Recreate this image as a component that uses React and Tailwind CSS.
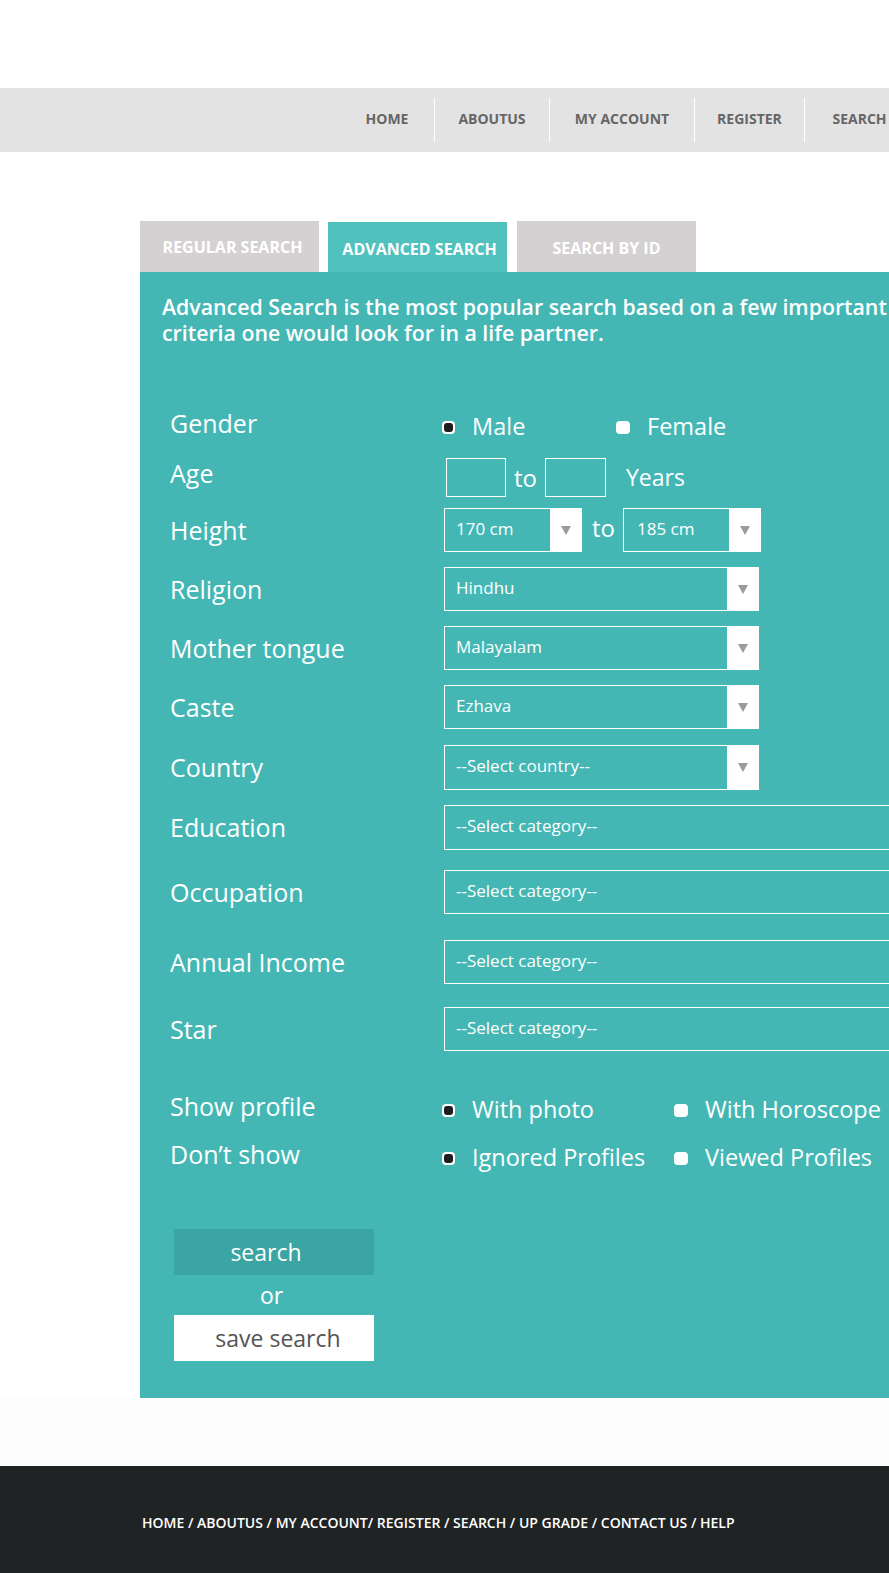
import React from "react";

const font = { fontFamily: '"Open Sans", "Noto Sans", Arial, sans-serif' };

function Radio({ checked }) {
  if (checked) {
    return (
      <span className="w-[13px] h-[13px] rounded-[4px] bg-white p-[2px] flex shrink-0">
        <span className="flex-1 rounded-[3px] bg-[#1d1d1d]" />
      </span>
    );
  }
  return <span className="w-[14px] h-[13px] rounded-[4px] bg-white shrink-0" />;
}

function Option({ checked, label, width }) {
  return (
    <div className="flex items-center" style={{ width }}>
      <Radio checked={checked} />
      <span className="ml-[17px] text-[23.5px] text-white leading-none">{label}</span>
    </div>
  );
}

function Select({ text, width, arrow = true, pl = "pl-[11px]", h = "h-[44px]" }) {
  return (
    <div className={`flex ${h} border border-white shrink-0`} style={{ width }}>
      <div className={`flex-1 flex items-center ${pl} pb-[3px] text-[17px] text-white whitespace-nowrap`}>{text}</div>
      {arrow && (
        <div className="w-[31px] bg-white flex items-center justify-center">
          <span className="w-0 h-0 border-x-[5px] border-x-transparent border-t-[9px] border-t-[#9b9b9b]" />
        </div>
      )}
    </div>
  );
}

function Label({ children, up }) {
  return (
    <div className={`w-[274px] shrink-0 text-[25px] text-white leading-none ${up ? "pb-[8px]" : ""}`}>
      {children}
    </div>
  );
}

export default function App() {
  const nav = [
    ["HOME", "w-[94px]", false],
    ["ABOUTUS", "w-[115px]", true],
    ["MY ACCOUNT", "w-[145px]", true],
    ["REGISTER", "w-[110px]", true],
    ["SEARCH", "w-[110px]", true],
  ];
  return (
    <div className="w-full overflow-hidden bg-white" style={font}>
      <div className="w-[1200px]">
        <div className="h-[88px]" />
        <div className="h-[64px] bg-[#e3e3e3] flex items-center pl-[340px]">
          {nav.map(([t, w, b]) => (
            <div
              key={t}
              className={`${w} h-[44px] flex items-center justify-center pb-[3px] text-[14px] font-bold text-[#666666] ${b ? "border-l border-white" : ""}`}
            >
              {t}
            </div>
          ))}
        </div>

        <div className="pt-[69px] pl-[140px]">
          <div className="flex items-end">
            <div className="w-[179px] h-[51px] bg-[#d5d1d2] flex items-center justify-center pl-[6px] text-[16px] font-bold text-white">
              REGULAR SEARCH
            </div>
            <div className="ml-[9px] w-[179px] h-[50px] bg-[#51c1be] flex items-center justify-center pt-[3px] pl-[4px] text-[16px] font-bold text-white">
              ADVANCED SEARCH
            </div>
            <div className="ml-[10px] w-[179px] h-[51px] bg-[#d5d1d2] flex items-center justify-center pt-[2px] text-[16px] font-bold text-white">
              SEARCH BY ID
            </div>
          </div>

          <div className="w-[1000px] bg-[#44b7b5] pt-[22px] pb-[37px]">
            <p className="pl-[22px] text-[21.3px] leading-[26px] font-semibold text-white whitespace-nowrap">
              Advanced Search is the most popular search based on a few important
              <br />
              criteria one would look for in a life partner.
            </p>

            <div className="pl-[30px] mt-[61px] flex flex-col">
              <div className="flex items-center h-[40px]">
                <Label up>Gender</Label>
                <div className="flex items-center -ml-[2px]">
                  <Option checked label="Male" width="174px" />
                  <Option label="Female" width="200px" />
                </div>
              </div>

              <div className="flex items-center h-[39px] mt-[11px]">
                <Label up>Age</Label>
                <div className="flex items-center ml-[2px]">
                  <div className="w-[60px] h-[39px] border border-white" />
                  <span className="mx-[8px] text-[24px] text-white leading-none">to</span>
                  <div className="w-[61px] h-[39px] border border-white" />
                  <span className="ml-[20px] text-[23px] text-white leading-none">Years</span>
                </div>
              </div>

              <div className="flex items-center h-[44px] mt-[11px]">
                <Label>Height</Label>
                <Select text="170 cm" width="138px" />
                <span className="ml-[10px] mr-[8px] pb-[4px] text-[24px] text-white leading-none">to</span>
                <Select text="185 cm" width="138px" pl="pl-[13px]" />
              </div>

              <div className="flex items-center h-[44px] mt-[15px]">
                <Label>Religion</Label>
                <Select text="Hindhu" width="315px" />
              </div>
              <div className="flex items-center h-[44px] mt-[15px]">
                <Label>Mother tongue</Label>
                <Select text="Malayalam" width="315px" />
              </div>
              <div className="flex items-center h-[44px] mt-[15px]">
                <Label>Caste</Label>
                <Select text="Ezhava" width="315px" />
              </div>
              <div className="flex items-center h-[45px] mt-[16px]">
                <Label>Country</Label>
                <Select text="--Select country--" width="315px" h="h-[45px]" />
              </div>
              <div className="flex items-center h-[45px] mt-[15px]">
                <Label>Education</Label>
                <Select text="--Select category--" width="520px" h="h-[45px]" />
              </div>
              <div className="flex items-center h-[44px] mt-[20px]">
                <Label>Occupation</Label>
                <Select text="--Select category--" width="520px" />
              </div>
              <div className="flex items-center h-[44px] mt-[26px]">
                <Label>Annual Income</Label>
                <Select text="--Select category--" width="520px" />
              </div>
              <div className="flex items-center h-[44px] mt-[23px]">
                <Label>Star</Label>
                <Select text="--Select category--" width="520px" />
              </div>

              <div className="flex items-center h-[30px] mt-[44px]">
                <Label up>Show profile</Label>
                <div className="flex items-center -ml-[2px]">
                  <Option checked label="With photo" width="232px" />
                  <Option label="With Horoscope" width="240px" />
                </div>
              </div>
              <div className="flex items-center h-[30px] mt-[18px]">
                <Label up>Don’t show</Label>
                <div className="flex items-center -ml-[2px]">
                  <Option checked label="Ignored Profiles" width="232px" />
                  <Option label="Viewed Profiles" width="240px" />
                </div>
              </div>

              <div className="ml-[4px] mt-[56px] w-[200px] flex flex-col">
                <div className="h-[46px] bg-[#3aa5a2] flex items-center justify-center pr-[16px] text-[23px] text-white">
                  search
                </div>
                <div className="h-[40px] flex items-center justify-center pr-[5px] text-[23px] text-white">
                  or
                </div>
                <div className="h-[46px] bg-white flex items-center justify-center pl-[8px] text-[23px] text-[#555555]">
                  save search
                </div>
              </div>
            </div>
          </div>
        </div>

        <div className="h-[68px] bg-[#fdfdfd]" />
        <div className="h-[112px] bg-[#1f2324] pl-[142px] flex items-center">
          <span className="text-[14px] font-semibold text-white">
            HOME / ABOUTUS / MY ACCOUNT/ REGISTER / SEARCH / UP GRADE / CONTACT US / HELP
          </span>
        </div>
      </div>
    </div>
  );
}
